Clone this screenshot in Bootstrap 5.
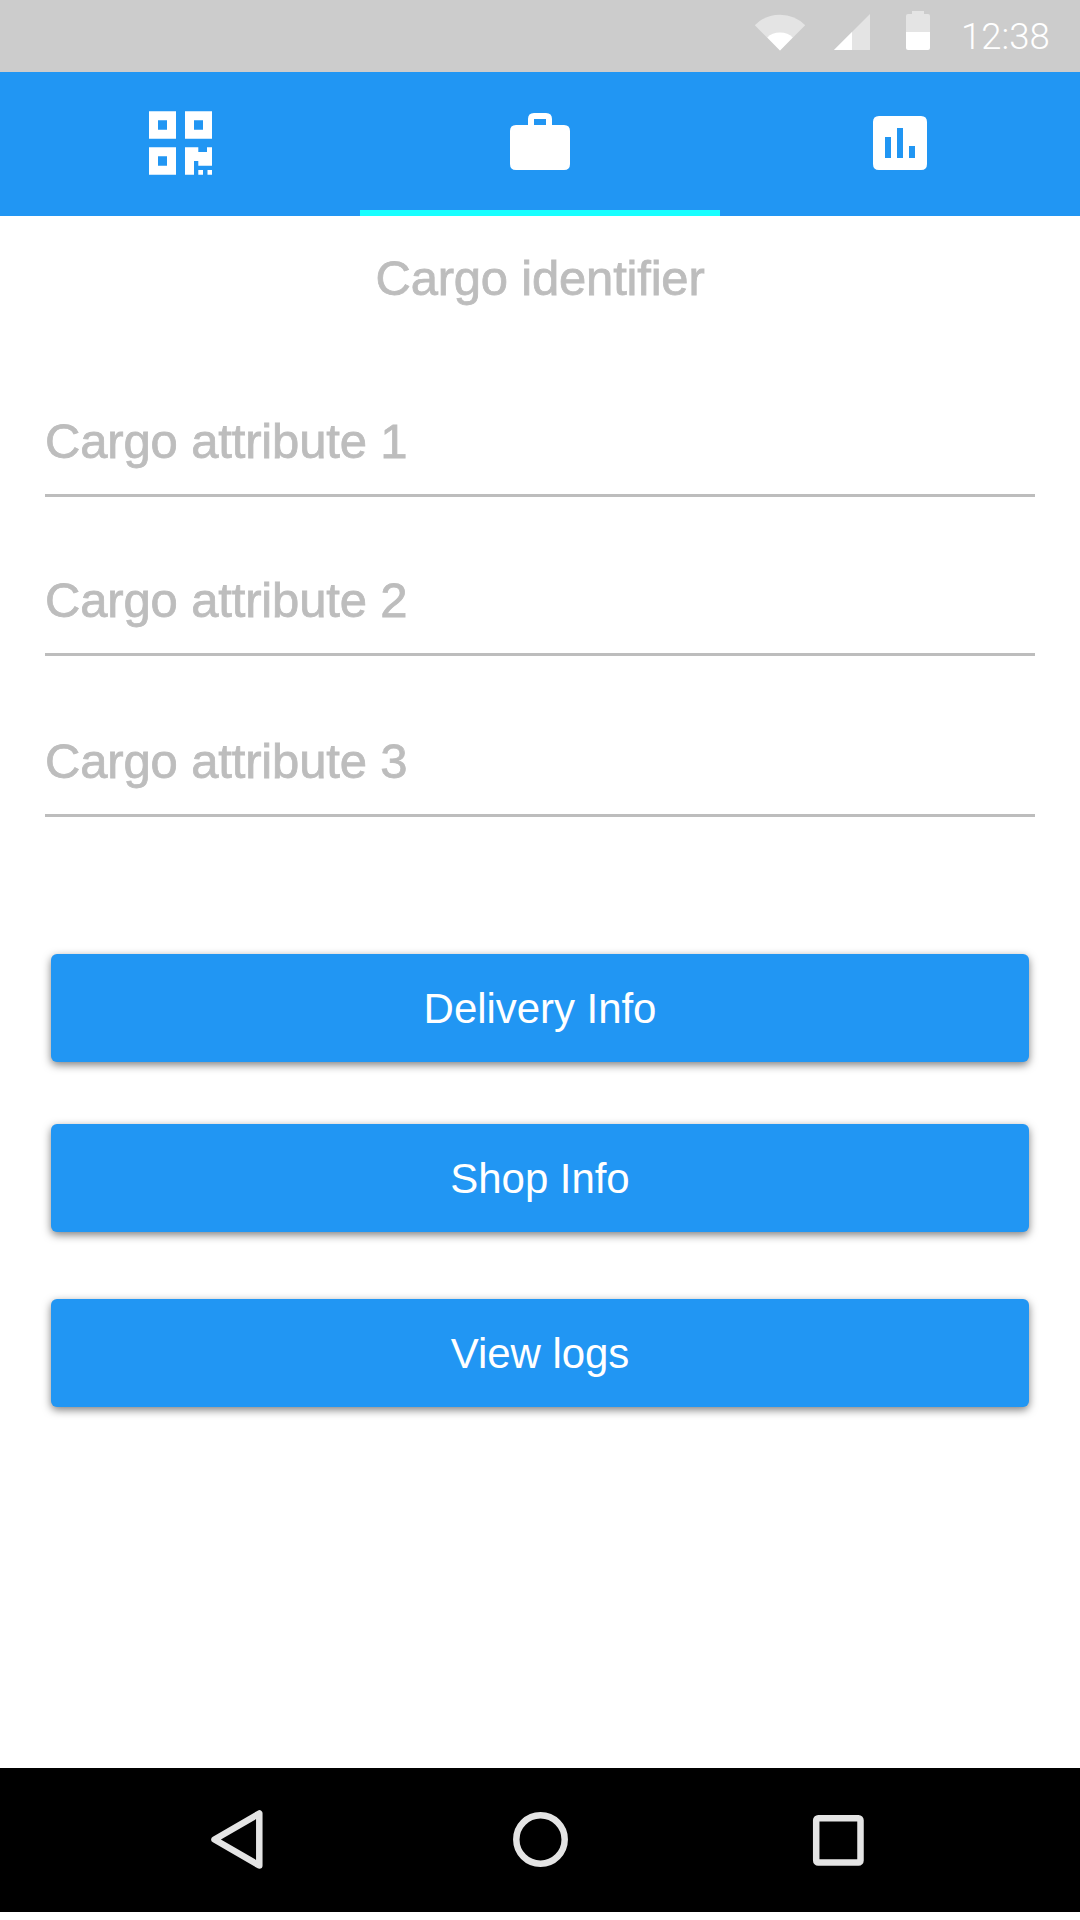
<!DOCTYPE html>
<html lang="en">
<head>
<meta charset="utf-8">
<meta name="viewport" content="width=device-width, initial-scale=1">
<title>Cargo</title>
<link href="https://cdn.jsdelivr.net/npm/bootstrap@5.3.0/dist/css/bootstrap.min.css" rel="stylesheet">
<style>
  body { font-family: "Liberation Sans", Arial, sans-serif; background: #fff; }
  .phone { width: 1080px; height: 1920px; }
  .phone svg { display: block; }
  .status-bar { height: 72px; background: #ccc; }
  .clock { font: 300 36.5px/74px Roboto, sans-serif; color: #fff; width: 91px; margin-left: 29px; margin-right: 28px; }
  .tab-bar { height: 144px; background: #2196f3; }
  .tab-bar .nav-link { padding: 0; border-bottom: 6px solid transparent; border-radius: 0; }
  .tab-bar .nav-link.active { border-bottom-color: #18ffff; }
  .cargo-title { font-size: 49px; line-height: 60px; letter-spacing: -.2px; color: #bdbdbd; margin: 32px 0 0; -webkit-text-stroke: .8px #bdbdbd; }
  .fields { padding: 0 45px; margin-top: 69px; gap: 39px; }
  .cargo-field, .cargo-field:focus { height: 120px; padding: 35px 0 25px; border: 0; border-bottom: 3px solid #bdbdbd; border-radius: 0; box-shadow: none; font-size: 49px; line-height: 60px; letter-spacing: -.15px; color: #bdbdbd; }
  .cargo-field::placeholder { color: #bdbdbd; opacity: 1; -webkit-text-stroke: .8px #bdbdbd; }
  .cargo-field:last-child { margin-top: 2px; }
  .actions { padding: 0 51px; margin-top: 137px; gap: 62px; }
  .btn-cargo, .btn-cargo:hover { height: 108px; padding: 2px 0 0; background: #2196f3; color: #fff; border: 0; border-radius: 6px; font-size: 42px; line-height: 1; letter-spacing: -.05px; box-shadow: 0 3px 9px rgba(0,0,0,.5); }
  .btn-cargo:last-child { margin-top: 5px; }
  .system-nav { height: 144px; background: #000; margin-bottom: 8px; }
</style>
<script src="https://cdn.jsdelivr.net/npm/bootstrap@5.3.0/dist/js/bootstrap.bundle.min.js"></script>
</head>
<body>
<div class="phone d-flex flex-column overflow-hidden">
  <header class="status-bar d-flex justify-content-end">
    <svg width="182" height="72" viewBox="750 0 182 72" aria-hidden="true">
      <path d="M780 50.500L754.800 25.300Q765 14.700 780 14.700T805.200 25.300Z" fill="#e4e4e4"/>
      <path d="M780 50.500L767.300 37.500Q772 32.500 780 32.500T792.700 37.500Z" fill="#fff"/>
      <path d="M834 50L870 14V50Z" fill="#e4e4e4"/>
      <path d="M834 50L852 32V50Z" fill="#fff"/>
      <path d="M912 11h12v3h4q2 0 2 2v16h-24V16q0-2 2-2h4Z" fill="#e4e4e4"/>
      <path d="M906 32h24v16q0 2-2 2h-20q-2 0-2-2Z" fill="#fff"/>
    </svg>
    <div class="clock">12:38</div>
  </header>

  <nav class="tab-bar nav nav-fill flex-nowrap">
    <a class="nav-link col-4" href="#" aria-label="Scan">
      <svg width="360" height="138" viewBox="0 72 360 138">
        <path fill="#fff" fill-rule="evenodd" d="M149 111.300h27v27.400h-27ZM158 120.300v9.400h9v-9.400ZM185 111.300h27v27.400h-27ZM194 120.300v9.400h9v-9.400ZM149 147.300h27v27.400h-27ZM158 156.300v9.400h9v-9.400ZM185 147.300h13.300v4.700h8.700v-4.700h5v18.400h-13.700V161H194v13.700h-9ZM198.300 170h4.700v4.700h-4.700ZM207.500 170h4.500v4.700h-4.500Z"/>
      </svg>
    </a>
    <a class="nav-link active col-4" href="#" aria-label="Cargo">
      <svg width="360" height="138" viewBox="360 72 360 138">
        <path fill="#fff" fill-rule="evenodd" d="M528 125v-6q0-6 6-6h12q6 0 6 6v6h12q6 0 6 6v33q0 6-6 6h-48q-6 0-6-6v-33q0-6 6-6ZM534 119v6h12v-6Z"/>
      </svg>
    </a>
    <a class="nav-link col-4" href="#" aria-label="Statistics">
      <svg width="360" height="138" viewBox="720 72 360 138">
        <path fill="#fff" fill-rule="evenodd" d="M879 116h42q6 0 6 6v42q0 6-6 6h-42q-6 0-6-6v-42q0-6 6-6ZM885 137v21h6v-21ZM897 128v30h6v-30ZM909 146v12h6v-12Z"/>
      </svg>
    </a>
  </nav>

  <main class="flex-grow-1">
    <h1 class="cargo-title text-center fw-normal">Cargo identifier</h1>
    <form class="fields d-flex flex-column">
      <input class="form-control cargo-field" placeholder="Cargo attribute 1">
      <input class="form-control cargo-field" placeholder="Cargo attribute 2">
      <input class="form-control cargo-field" placeholder="Cargo attribute 3">
    </form>
    <div class="actions d-flex flex-column">
      <button class="btn btn-cargo" type="button">Delivery Info</button>
      <button class="btn btn-cargo" type="button">Shop Info</button>
      <button class="btn btn-cargo" type="button">View logs</button>
    </div>
  </main>

  <footer class="system-nav d-flex">
    <svg width="1080" height="144" viewBox="0 1768 1080 144" fill="none" stroke="#e4e4e4" stroke-width="6.500" aria-hidden="true">
      <path d="M259.300 1813.500V1865.500L214.500 1839.500Z" stroke-linejoin="round"/>
      <circle cx="540.500" cy="1839.500" r="24.200"/>
      <rect x="816.200" y="1818.300" width="44.300" height="44.300" rx="2"/>
    </svg>
  </footer>
</div>
</body>
</html>
